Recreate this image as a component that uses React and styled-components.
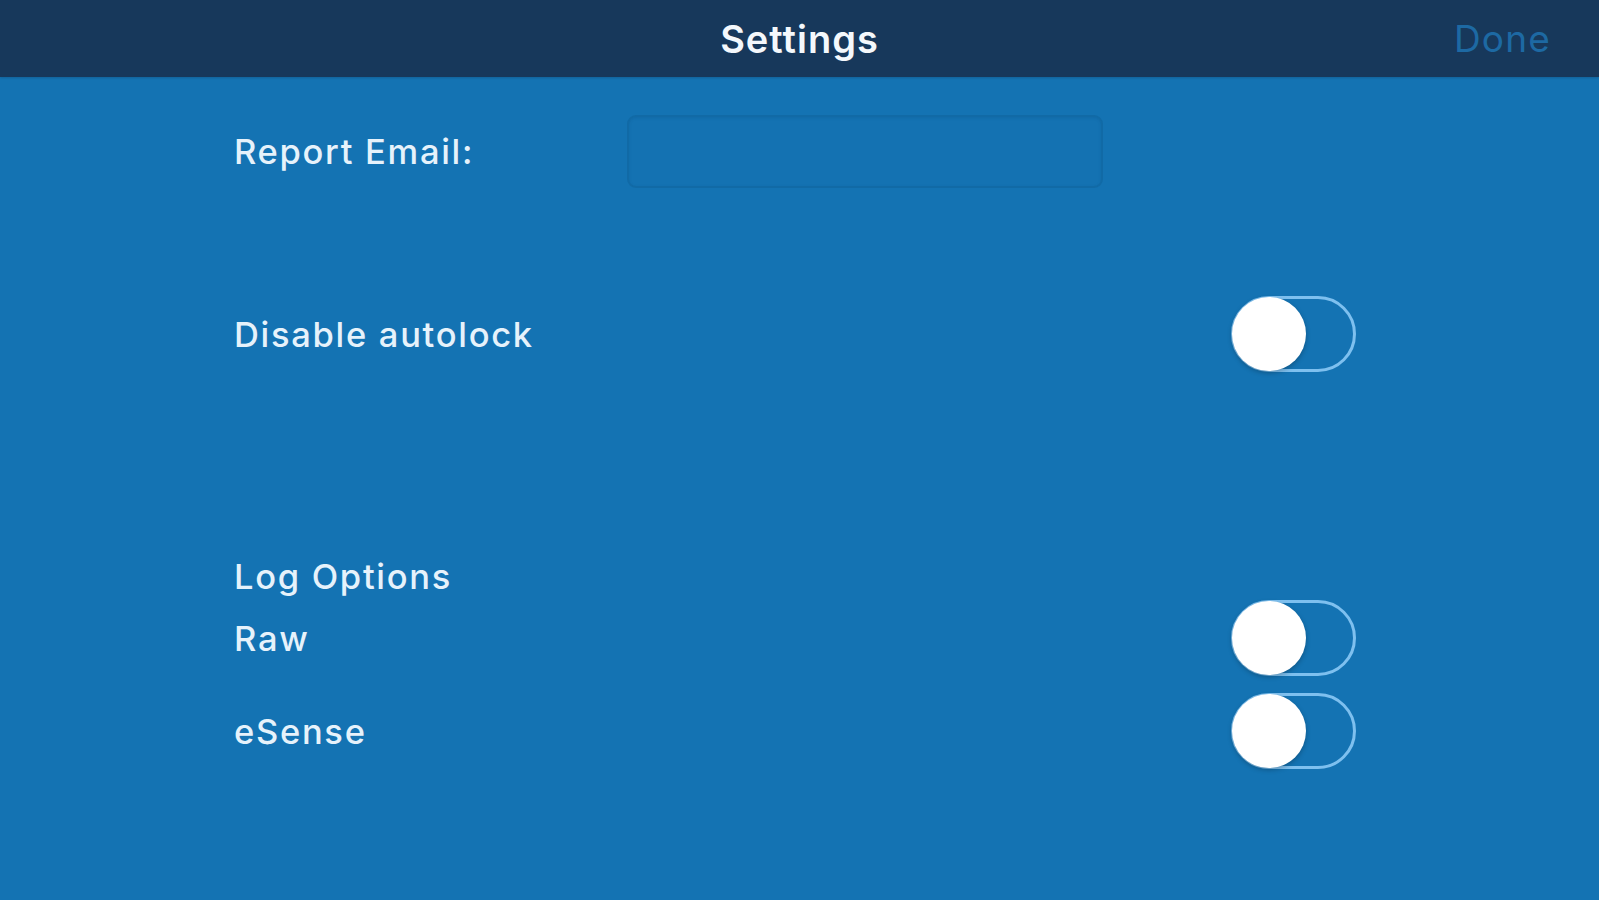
import React, { useState } from "react";
import styled, { createGlobalStyle } from "styled-components";

const Global = createGlobalStyle`
  html, body { margin: 0; padding: 0; }
  body {
    background: #1473b3;
    font-family: Inter, "Noto Sans", "Liberation Sans", sans-serif;
    -webkit-font-smoothing: antialiased;
  }
`;

const Page = styled.div`
  width: 1599px;
  height: 900px;
  background: #1473b3;
  display: flex;
  flex-direction: column;
  overflow: hidden;
`;

const NavBar = styled.header`
  height: 77px;
  flex: 0 0 77px;
  background: #17385b;
  display: grid;
  grid-template-columns: 1fr auto 1fr;
  align-items: center;
  box-shadow: 0 1px 2px rgba(0, 0, 0, 0.15);
`;

const Title = styled.h1`
  grid-column: 2;
  margin: 0;
  font-size: 38px;
  font-weight: 600;
  color: #f4f8fc;
  letter-spacing: 1px;
`;

const DoneButton = styled.button`
  grid-column: 3;
  justify-self: end;
  margin-right: 48px;
  background: none;
  border: none;
  padding: 0;
  font-family: inherit;
  font-size: 37px;
  font-weight: 400;
  letter-spacing: 1.2px;
  color: #1d69a3;
  cursor: pointer;
`;

const Content = styled.main`
  display: flex;
  flex-direction: column;
  padding-left: 234px;
  width: 1122px;
`;

const Row = styled.div`
  display: flex;
  align-items: center;
  height: ${(p) => p.$h || 76}px;
  margin-top: ${(p) => p.$mt || 0}px;
`;

const Label = styled.span`
  font-size: 34.5px;
  font-weight: 500;
  letter-spacing: 1.7px;
  color: #e6f2fb;
  width: ${(p) => (p.$w ? `${p.$w}px` : "auto")};
  flex: ${(p) => (p.$w ? "0 0 auto" : "1")};
`;

const SectionTitle = styled.div`
  font-size: 34.5px;
  font-weight: 500;
  letter-spacing: 1.7px;
  color: #e6f2fb;
  height: 46px;
  line-height: 46px;
  margin-top: ${(p) => p.$mt || 0}px;
`;

const EmailInput = styled.input`
  width: 476px;
  height: 73px;
  box-sizing: border-box;
  background: #1472b2;
  border: 2px solid #116aa6;
  border-radius: 9px;
  box-shadow: inset 0 1px 3px rgba(0, 60, 110, 0.15);
  font-family: inherit;
  font-size: 30px;
  color: #fff;
  padding: 0 16px;
  outline: none;
`;

const Track = styled.button`
  position: relative;
  width: 125px;
  height: 76px;
  box-sizing: border-box;
  border-radius: 38px;
  border: 3px solid ${(p) => (p.$on ? "#4cd964" : "#7ec0ef")};
  background: ${(p) => (p.$on ? "#4cd964" : "transparent")};
  padding: 0;
  cursor: pointer;
  flex: 0 0 auto;
`;

const Knob = styled.span`
  position: absolute;
  top: -2px;
  left: ${(p) => (p.$on ? "48px" : "-2px")};
  width: 74px;
  height: 74px;
  border-radius: 50%;
  background: #ffffff;
  box-shadow: 0 2px 5px rgba(0, 0, 0, 0.25);
  transition: left 0.2s;
`;

function Toggle({ on, onChange }) {
  return (
    <Track $on={on} onClick={() => onChange(!on)} aria-pressed={on}>
      <Knob $on={on} />
    </Track>
  );
}

export default function App() {
  const [email, setEmail] = useState("");
  const [autolock, setAutolock] = useState(false);
  const [raw, setRaw] = useState(false);
  const [esense, setEsense] = useState(false);

  return (
    <Page>
      <Global />
      <NavBar>
        <Title>Settings</Title>
        <DoneButton>Done</DoneButton>
      </NavBar>
      <Content>
        <Row $h={73} $mt={38}>
          <Label $w={393}>Report Email:</Label>
          <EmailInput value={email} onChange={(e) => setEmail(e.target.value)} />
        </Row>
        <Row $mt={108}>
          <Label>Disable autolock</Label>
          <Toggle on={autolock} onChange={setAutolock} />
        </Row>
        <SectionTitle $mt={182}>Log Options</SectionTitle>
        <Row>
          <Label>Raw</Label>
          <Toggle on={raw} onChange={setRaw} />
        </Row>
        <Row $mt={17}>
          <Label>eSense</Label>
          <Toggle on={esense} onChange={setEsense} />
        </Row>
      </Content>
    </Page>
  );
}
